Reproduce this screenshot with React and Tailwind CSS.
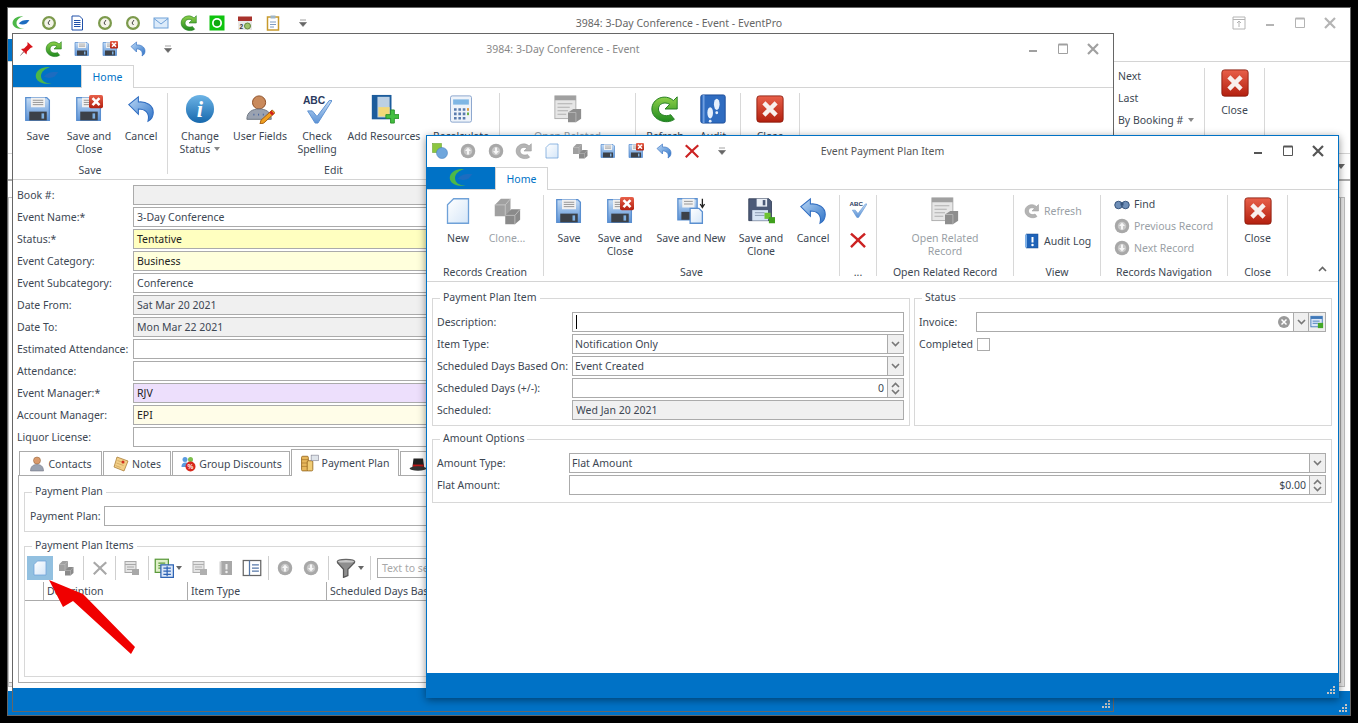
const Svg = ({ size = 16, children, className = "" }) => (
  <svg width={size} height={size} viewBox="0 0 32 32" className={"shrink-0 " + className}>
    {children}
  </svg>
);

const Defs = () => (
  <svg className="absolute w-0 h-0">
    <defs>
      <linearGradient id="blu" x1="0" y1="0" x2="0" y2="1">
        <stop offset="0" stopColor="#c4dcf5" />
        <stop offset="1" stopColor="#5d93d6" />
      </linearGradient>
      <linearGradient id="und" x1="0" y1="0" x2="1" y2="1">
        <stop offset="0" stopColor="#bcd8f5" />
        <stop offset="1" stopColor="#2f74c8" />
      </linearGradient>
      <linearGradient id="grn" x1="0" y1="0" x2="0" y2="1">
        <stop offset="0" stopColor="#8ed04a" />
        <stop offset="1" stopColor="#1f8a1f" />
      </linearGradient>
      <linearGradient id="red" x1="0" y1="0" x2="0" y2="1">
        <stop offset="0" stopColor="#e8604a" />
        <stop offset="1" stopColor="#b3200f" />
      </linearGradient>
      <linearGradient id="ppr" x1="0" y1="0" x2="1" y2="1">
        <stop offset="0" stopColor="#ffffff" />
        <stop offset="1" stopColor="#d5e6f8" />
      </linearGradient>
      <linearGradient id="inf" x1="0" y1="0" x2="0" y2="1">
        <stop offset="0" stopColor="#6db4e6" />
        <stop offset="1" stopColor="#1668ad" />
      </linearGradient>
    </defs>
  </svg>
);

const Logo = ({ size = 24 }) => (
  <Svg size={size}>
    <path d="M20 4C9 3 1 9 1 16c0 7 9 12 21 10-9 0-14-4-14-10 0-6 6-10 12-12z" fill="#4cb848" />
    <path d="M12 17c4-6 12-7 19-6l-5 6c-4 2-10 2-14 0z" fill="#1c6cc0" />
  </Svg>
);

const Clock = ({ size = 16 }) => (
  <Svg size={size}>
    <circle cx="16" cy="16" r="14" fill="#7c9a4c" />
    <circle cx="16" cy="16" r="9.5" fill="#f4f4ea" />
    <path d="M18 10l-4 6 3 4" fill="none" stroke="#444" strokeWidth="2" />
  </Svg>
);

const DocLines = ({ size = 16 }) => (
  <Svg size={size}>
    <path d="M6 2h15l6 6v22H6z" fill="#fff" stroke="#1f4fa8" strokeWidth="2" />
    <path d="M10 11h13M10 15h13M10 19h13M10 23h13" stroke="#1f4fa8" strokeWidth="2" />
  </Svg>
);

const Mail = ({ size = 16 }) => (
  <Svg size={size}>
    <rect x="2" y="6" width="28" height="20" fill="#dcebfa" stroke="#6fa1d8" strokeWidth="2" />
    <path d="M2 7l14 11L30 7" fill="none" stroke="#6fa1d8" strokeWidth="2" />
  </Svg>
);

const Refresh = ({ size = 18, gray = false }) => (
  <Svg size={size}>
    <path
      d="M29 3v13H16l5-5c-5-3-12-1-12 5s8 9 13 6l4 5C18 33 2 28 2 16 2 5 16-1 25 7z"
      fill={gray ? "#b4b4b4" : "url(#grn)"}
      stroke={gray ? "#999" : "#1f7a1f"}
      strokeWidth="1"
    />
  </Svg>
);

const GearGreen = ({ size = 16 }) => (
  <Svg size={size}>
    <rect x="1" y="1" width="30" height="30" fill="#0fc40f" />
    <circle cx="16" cy="16" r="10" fill="#fff" />
    <circle cx="16" cy="16" r="6.5" fill="#0fa80f" />
  </Svg>
);

const Calendar = ({ size = 16 }) => (
  <Svg size={size}>
    <rect x="2" y="8" width="28" height="22" fill="#e8e8e8" />
    <rect x="2" y="3" width="28" height="9" fill="#a8322c" />
    <text x="5" y="27" fontSize="13" fontWeight="700" fill="#333" fontFamily="Liberation Sans">2</text>
    <circle cx="21" cy="22" r="6" fill="#9fc46a" stroke="#64883c" strokeWidth="2" />
  </Svg>
);

const Clipboard = ({ size = 16 }) => (
  <Svg size={size}>
    <rect x="5" y="4" width="22" height="26" fill="#fff" stroke="#c89a2c" strokeWidth="3" />
    <rect x="11" y="1" width="10" height="6" fill="#9fb6c8" />
    <path d="M10 14h12M10 19h12M10 24h8" stroke="#7f9cc0" strokeWidth="2" />
  </Svg>
);

const Pin = ({ size = 16 }) => (
  <Svg size={size}>
    <path d="M19 2l11 10-5 2-7 7-1 6-5-5-8 8 7-9-5-5 6-1 7-7z" fill="#d8161c" />
    <path d="M5 29l7-8" stroke="#999" strokeWidth="2" />
  </Svg>
);

const Floppy = ({ size = 28, x = false }) => (
  <Svg size={size}>
    <path d="M2 3h24l3 3v23H2z" fill="url(#blu)" stroke="#5a8fd0" strokeWidth="1.5" />
    <rect x="8" y="3" width="16" height="11" fill="#f1f1f1" />
    <path d="M10 6h12M10 8.500h12M10 11h12" stroke="#8a8a8a" strokeWidth="1" />
    <rect x="6" y="19" width="20" height="10" fill="#3c4148" />
    <rect x="20" y="21" width="3" height="6" fill="#7fb0e0" />
    {x && (
      <g>
        <rect x="16" y="0" width="16" height="15" rx="2" fill="url(#red)" />
        <path d="M20 3.500l8 8M28 3.500l-8 8" stroke="#fff" strokeWidth="3" />
      </g>
    )}
  </Svg>
);

const SaveNew = ({ size = 28 }) => (
  <Svg size={size}>
    <path d="M1 2h22v24H1z" fill="url(#blu)" stroke="#5a8fd0" strokeWidth="1.500" />
    <rect x="6" y="2" width="14" height="10" fill="#f1f1f1" />
    <path d="M8 5h10M8 8h10" stroke="#8a8a8a" />
    <rect x="5" y="17" width="14" height="9" fill="#3c4148" />
    <path d="M15 13h10l4 4v13H15z" fill="url(#ppr)" stroke="#5a8fd0" strokeWidth="1.500" />
    <path d="M29 2v9M26.500 8l2.500 4 2.500-4" fill="none" stroke="#222" strokeWidth="1.500" />
  </Svg>
);

const SaveClone = ({ size = 28 }) => (
  <Svg size={size}>
    <path d="M2 2h23l3 3v22H2z" fill="#4c5a78" stroke="#37435c" />
    <rect x="11" y="2" width="12" height="9" fill="#e8edf5" />
    <rect x="18" y="3.500" width="3" height="6" fill="#4c5a78" />
    <rect x="6" y="15" width="18" height="12" fill="#d6e4f5" />
    <path d="M9 18h11M9 21h11" stroke="#7c8ca5" />
    <rect x="20" y="18" width="7" height="7" fill="#6cc230" />
    <rect x="25" y="23" width="7" height="7" fill="#3fa01c" />
  </Svg>
);

const Undo = ({ size = 28 }) => (
  <Svg size={size}>
    <path
      d="M2 11L13 2v6c9-1 17 4 17 12 0 4-2 8-6 10 1-4 1-8-2-11-3-3-6-3-9-3v6z"
      fill="url(#und)"
      stroke="#2f6cc0"
      strokeWidth="1.200"
    />
  </Svg>
);

const Info = ({ size = 30 }) => (
  <Svg size={size}>
    <circle cx="16" cy="16" r="15" fill="url(#inf)" />
    <text x="16" y="25" textAnchor="middle" fontSize="24" fontStyle="italic" fontWeight="700" fill="#fff" fontFamily="Liberation Serif">i</text>
  </Svg>
);

const UserPen = ({ size = 30 }) => (
  <Svg size={size}>
    <circle cx="15" cy="9" r="7" fill="#c98a5c" stroke="#8a4a20" />
    <path d="M2 27c0-8 6-11 13-11s13 3 13 11z" fill="#9aa2b0" stroke="#6c7480" />
    <path d="M9 22h1M14 22h1M19 22h1" stroke="#3f5f9c" strokeWidth="2" />
    <path d="M29 17l3 3-12 11-4 1 1-4z" fill="#f0a020" stroke="#a05a10" />
    <path d="M27 19l3 3" stroke="#d02020" strokeWidth="3" />
  </Svg>
);

const AbcCheck = ({ size = 30 }) => (
  <Svg size={size}>
    <text x="1" y="11" fontSize="11" fontWeight="700" fill="#2a3a60" fontFamily="Liberation Sans">ABC</text>
    <path d="M6 18l5 0 5 6L29 7l3 0-15 24h-3z" fill="url(#blu)" stroke="#5a8fd0" />
  </Svg>
);

const Cabinet = ({ size = 30 }) => (
  <Svg size={size}>
    <path d="M3 1h21v26H3z" fill="#1c5c9c" />
    <path d="M9 3h13v22H9z" fill="#bcd0e4" />
    <path d="M10 14h12v10H10z" fill="#f2d878" />
    <path d="M18 22h5v-5h4v5h5v4h-5v5h-4v-5h-5z" fill="#44c040" stroke="#2a9028" />
  </Svg>
);

const Calc = ({ size = 28 }) => (
  <Svg size={size}>
    <rect x="4" y="1" width="24" height="30" rx="2" fill="#eef3fa" stroke="#7f9cc8" />
    <rect x="7" y="5" width="18" height="6" fill="#7fb6e4" />
    <path d="M8 15h3v3H8zM13 15h3v3h-3zM18 15h3v3h-3zM8 20h3v3H8zM13 20h3v3h-3zM18 20h3v3h-3zM8 25h3v3H8zM13 25h3v3h-3zM18 25h3v3h-3z" fill="#5a7cae" />
    <rect x="23" y="15" width="2" height="3" fill="#e08a20" />
    <rect x="23" y="20" width="2" height="3" fill="#5aa830" />
  </Svg>
);

const Related = ({ size = 28 }) => (
  <Svg size={size}>
    <rect x="1" y="1" width="24" height="26" fill="#e6e6e6" stroke="#a8a8a8" />
    <rect x="1" y="1" width="24" height="5" fill="#a0a0a0" />
    <path d="M4 10h17M4 14h14M4 18h12M4 22h10" stroke="#a8a8a8" />
    <path d="M16 20l6-4h9v11l-6 4h-9z" fill="#8e8e8e" />
    <path d="M16 20h9v11" fill="none" stroke="#b8b8b8" />
  </Svg>
);

const Steps = ({ size = 30 }) => (
  <Svg size={size}>
    <rect x="3" y="1" width="26" height="30" rx="2" fill="#2f6cc0" stroke="#1c4c98" />
    <path d="M6 1v30" stroke="#6f9fe0" strokeWidth="2" />
    <ellipse cx="20" cy="11" rx="3" ry="6" fill="#e6f0fc" />
    <ellipse cx="13" cy="20" rx="3" ry="6" fill="#e6f0fc" />
    <circle cx="20" cy="20" r="1.500" fill="#e6f0fc" />
    <circle cx="13" cy="29" r="1.500" fill="#e6f0fc" />
  </Svg>
);

const CloseBox = ({ size = 28 }) => (
  <Svg size={size}>
    <rect x="1" y="1" width="30" height="30" rx="3" fill="url(#red)" stroke="#8a1a0c" />
    <path d="M9 9l14 14M23 9L9 23" stroke="#f8f0ee" strokeWidth="5" />
  </Svg>
);

const Page = ({ size = 28 }) => (
  <Svg size={size}>
    <path d="M11 2h17v28H4V9z" fill="url(#ppr)" stroke="#6fa1d8" strokeWidth="1.500" />
  </Svg>
);

const Cubes = ({ size = 28, c = "#a0a0a0" }) => (
  <Svg size={size}>
    <path d="M2 9l7-7h11v15l-6 5H2z" fill={c} />
    <path d="M2 9h12v13M14 9l6-7" fill="none" stroke="#c8c8c8" />
    <path d="M14 21l7-7h10v12l-6 5H14z" fill="#8a8a8a" />
    <path d="M14 21h11v10M25 21l6-7" fill="none" stroke="#c0c0c0" />
  </Svg>
);

const Shapes = ({ size = 16 }) => (
  <Svg size={size}>
    <rect x="1" y="1" width="18" height="18" fill="#8cc63f" stroke="#5f9a20" />
    <circle cx="20" cy="20" r="11" fill="#6fa6dc" stroke="#3f78b8" />
  </Svg>
);

const Nav = ({ size = 16, dir = "up" }) => (
  <Svg size={size}>
    <circle cx="16" cy="16" r="14.500" fill="#a8a8a8" />
    <circle cx="16" cy="16" r="8.500" fill="#c8c8c8" />
    <path
      d={dir === "up" ? "M16 9l6 7h-4v7h-4v-7h-4z" : "M16 23l6-7h-4V9h-4v7h-4z"}
      fill="#f6f6f6"
    />
  </Svg>
);

const RedX = ({ size = 16, c = "#cc2222" }) => (
  <Svg size={size}>
    <path d="M5 3l11 10L27 3l3 3-11 10 11 11-3 3-11-11L5 30l-3-3 11-11L2 6z" fill={c} />
  </Svg>
);

const Binoculars = ({ size = 16 }) => (
  <Svg size={size}>
    <circle cx="9" cy="18" r="7.500" fill="#6f8fb8" stroke="#36547c" strokeWidth="2" />
    <circle cx="23" cy="18" r="7.500" fill="#6f8fb8" stroke="#36547c" strokeWidth="2" />
    <rect x="13" y="13" width="6" height="6" fill="#36547c" />
  </Svg>
);

const AuditSmall = ({ size = 16 }) => (
  <Svg size={size}>
    <rect x="5" y="2" width="23" height="28" fill="#1f63b8" stroke="#174a8c" />
    <rect x="2" y="3" width="4" height="26" fill="#7fb0e6" />
    <path d="M17 8v11" stroke="#fff" strokeWidth="4" />
    <circle cx="17" cy="24" r="2.500" fill="#fff" />
  </Svg>
);

const AuditGray = () => (
  <Svg size={16}>
    <rect x="6" y="2" width="22" height="28" fill="#a8a8a8" />
    <rect x="3" y="3" width="4" height="26" fill="#d0d0d0" />
    <path d="M17 8v11" stroke="#eee" strokeWidth="4" />
    <circle cx="17" cy="24" r="2.500" fill="#eee" />
  </Svg>
);

const Contact = ({ size = 16 }) => (
  <Svg size={size}>
    <circle cx="16" cy="9" r="7" fill="#d99a6c" stroke="#8a5a30" />
    <path d="M3 30c0-10 6-13 13-13s13 3 13 13z" fill="#9aa2b0" stroke="#667" />
  </Svg>
);

const Notes = ({ size = 16 }) => (
  <Svg size={size}>
    <path d="M8 2l22 8-8 20-20-8z" fill="#f2cf88" stroke="#a87a30" strokeWidth="1.500" />
    <path d="M9 9l14 5M7 14l14 5M5 19l10 4" stroke="#b88a40" />
    <circle cx="20" cy="12" r="3" fill="#d03020" />
  </Svg>
);

const Discount = ({ size = 16 }) => (
  <Svg size={size}>
    <circle cx="10" cy="7" r="5" fill="#5a9be0" />
    <circle cx="21" cy="7" r="5" fill="#7cc04c" />
    <path d="M3 22c0-7 4-9 8-9s8 2 8 9z" fill="#5a9be0" />
    <circle cx="21" cy="21" r="10" fill="#d8281c" />
    <text x="21" y="26" textAnchor="middle" fontSize="13" fontWeight="700" fill="#fff" fontFamily="Liberation Sans">%</text>
  </Svg>
);

const Coins = ({ size = 18 }) => (
  <Svg size={size}>
    <rect x="1" y="4" width="12" height="26" rx="2" fill="#e8b85c" stroke="#96661c" strokeWidth="1.500" />
    <path d="M1 10h12M1 16h12M1 22h12" stroke="#96661c" />
    <rect x="11" y="12" width="10" height="18" rx="2" fill="#f0cc74" stroke="#96661c" strokeWidth="1.500" />
    <rect x="18" y="2" width="13" height="10" fill="#dfe4ea" stroke="#778" />
  </Svg>
);

const Hat = ({ size = 18 }) => (
  <Svg size={size}>
    <path d="M8 6h17l2 16H6z" fill="#222" />
    <rect x="7" y="17" width="19" height="4" fill="#c01818" />
    <ellipse cx="16" cy="24" rx="15" ry="4" fill="#333" />
  </Svg>
);

const TableIco = ({ size = 16, c = "#a8a8a8" }) => (
  <Svg size={size}>
    <rect x="2" y="3" width="22" height="22" fill="#e4e4e4" stroke={c} strokeWidth="2" />
    <path d="M2 9h22M6 14h14M6 19h14" stroke={c} strokeWidth="2" />
    <rect x="16" y="18" width="14" height="12" fill={c} />
  </Svg>
);

const ColumnsIco = ({ size = 20 }) => (
  <Svg size={size}>
    <rect x="2" y="2" width="21" height="21" fill="#dff0c8" stroke="#5c9a3c" strokeWidth="2" />
    <path d="M7 8h11M7 12h11M7 16h11" stroke="#5c9a3c" strokeWidth="2" />
    <rect x="11" y="11" width="20" height="20" fill="#dbe7f8" stroke="#2f64b4" strokeWidth="2" />
    <path d="M15 16h12M15 21h12M15 26h12M21 13v16" stroke="#2f64b4" strokeWidth="2" />
  </Svg>
);

const PanelIco = ({ size = 20 }) => (
  <Svg size={size}>
    <rect x="2" y="4" width="28" height="24" fill="#fff" stroke="#666" strokeWidth="2" />
    <path d="M12 4v24M16 11h11M16 16h11M16 21h11" stroke="#5577a8" strokeWidth="2" />
  </Svg>
);

const Funnel = ({ size = 20 }) => (
  <Svg size={size}>
    <ellipse cx="16" cy="6" rx="14" ry="4" fill="#c8c8c8" stroke="#666" strokeWidth="2" />
    <path d="M2 7l10 11v13l7-3V18L30 7" fill="#8e8e8e" stroke="#555" strokeWidth="2" />
  </Svg>
);

const TableGreen = () => (
  <Svg size={14}>
    <rect x="2" y="3" width="26" height="24" fill="#dbe7f8" stroke="#3f78b8" strokeWidth="2" />
    <rect x="2" y="3" width="26" height="6" fill="#3f78b8" />
    <path d="M6 14h16M6 19h12" stroke="#3f78b8" strokeWidth="2" />
    <rect x="18" y="18" width="12" height="12" fill="#44a828" />
  </Svg>
);

const Caret = ({ className = "" }) => (
  <span className={"inline-block w-0 h-0 border-x-[3px] border-x-transparent border-t-[4px] border-t-[#666] " + className} />
);

const QatMore = () => (
  <svg width="8" height="8" viewBox="0 0 8 8" className="ml-[4px]">
    <path d="M1 1h6M0.500 3.500h7l-3.500 4z" fill="#666" stroke="#666" strokeWidth="0.600" />
  </svg>
);

const Grip = () => (
  <svg width="8" height="8" viewBox="0 0 8 8" fill="#c4c4c4">
    <path d="M6 0h2v2H6zM3 3h2v2H3zM6 3h2v2H6zM0 6h2v2H0zM3 6h2v2H3zM6 6h2v2H6z" />
  </svg>
);

const Chev = ({ up = false, c = "#777" }) => (
  <svg width="9" height="6" viewBox="0 0 9 6">
    <path d={up ? "M1 5l3.500-3.500L8 5" : "M1 1l3.500 3.500L8 1"} fill="none" stroke={c} strokeWidth="1.600" />
  </svg>
);

const Cell = ({ children }) => (
  <div className="w-[28px] h-[28px] flex items-center justify-center shrink-0">{children}</div>
);

const Controls = ({ pin = false, c }) => (
  <div className="flex items-center gap-[14px] pr-[12px] pb-[2px]">
    {pin && (
      <svg width="14" height="14" viewBox="0 0 14 14" fill="none" stroke={c} className="mr-[2px]">
        <path d="M1 1h12v12H1zM1 3.500h12M7 11V5M5 7l2-2 2 2" />
      </svg>
    )}
    <svg width="16" height="16" viewBox="0 0 16 16"><rect x="4" y="9" width="8" height="2" fill={c} /></svg>
    <svg width="16" height="16" viewBox="0 0 16 16" fill="none" stroke={c}><path d="M3.500 3.500h9v9h-9z" /><path d="M3.500 3.500h9" strokeWidth="2" /></svg>
    <svg width="16" height="16" viewBox="0 0 16 16" fill="none" stroke={c} strokeWidth="2.200"><path d="M3 3l10 10M13 3L3 13" /></svg>
  </div>
);

const TitleBar = ({ title, titleColor, btn, pin, children }) => (
  <div className="relative h-[31px] flex items-center justify-between shrink-0">
    <div className="flex items-center -ml-px pb-[2px]">{children}</div>
    <div className={"absolute inset-x-0 top-0 h-full pb-[2px] flex items-center justify-center pointer-events-none " + titleColor}>
      {title}
    </div>
    <Controls pin={pin} c={btn} />
  </div>
);

const TabRow = ({ blueW = "w-[68px]", homeW = "w-[53px]" }) => (
  <div className="flex h-[23px] border-b border-[#d4d4d4] shrink-0">
    <div className={"h-[22px] bg-[#0072c6] flex items-center justify-center " + blueW}>
      <Logo size={24} />
    </div>
    <div className={"h-[23px] bg-white border border-b-0 border-[#d4d4d4] text-[#0072c6] flex items-center justify-center " + homeW}>
      Home
    </div>
  </div>
);

const Group = ({ label, className = "", pad = "", children }) => (
  <div className={"h-[81px] flex flex-col shrink-0 border-r border-[#d8d8d8] " + className}>
    <div className={"h-[70px] flex shrink-0 " + pad}>{children}</div>
    {label && <div className="text-center leading-[14px] whitespace-nowrap">{label}</div>}
  </div>
);

const Big = ({ w, icon, l1, l2, dis = false, caret = false }) => (
  <div className={"flex flex-col items-center pt-[2px] shrink-0 " + w + (dis ? " text-[#9a9fa6]" : "")}>
    <div className="h-[28px] flex items-center justify-center">{icon}</div>
    <div className="mt-[7px] leading-[13px] text-center whitespace-nowrap">
      {l1}
      {l2 && <br />}
      {l2}
      {caret && <Caret className="ml-[4px] mb-[2px] border-t-[#888]" />}
    </div>
  </div>
);

const SmallBtn = ({ icon, text, dis = false }) => (
  <div className={"flex items-center gap-[4px] whitespace-nowrap h-[22px]" + (dis ? " text-[#9a9fa6]" : "")}>
    {icon}
    <span>{text}</span>
  </div>
);

const Box = ({ className = "", children }) => (
  <div className={"h-[20px] border border-[#ababab] flex items-center overflow-hidden whitespace-nowrap " + className}>{children}</div>
);

const Combo = ({ text, className = "" }) => (
  <Box className={className}>
    <span className="flex-1 px-[2px] whitespace-nowrap">{text}</span>
    <span className="w-[16px] h-full bg-[#efefef] border-l border-[#ababab] flex items-center justify-center">
      <Chev />
    </span>
  </Box>
);

const Spin = ({ text, className = "" }) => (
  <Box className={className}>
    <span className="flex-1 px-[3px] text-right">{text}</span>
    <span className="w-[16px] h-full bg-[#efefef] border-l border-[#ababab] flex flex-col items-center justify-center gap-[1px]">
      <Chev up />
      <Chev />
    </span>
  </Box>
);

const Row = ({ label, w, children }) => (
  <div className="flex items-center h-[20px]">
    <div className={"shrink-0 whitespace-nowrap " + w}>{label}</div>
    {children}
  </div>
);

const Grp = ({ title, className = "", children }) => (
  <fieldset className={"border border-[#d8d8d8] min-w-0 px-[4px] " + className}>
    <legend className="ml-[3px] px-[3px] leading-[12px] h-[14px]">{title}</legend>
    {children}
  </fieldset>
);

const Status = ({ className = "" }) => (
  <div className={"bg-[#0072c6] flex justify-end items-end pr-[3px] pb-[3px] shrink-0 " + className}>
    <Grip />
  </div>
);

const TabItem = ({ icon, text, active = false, className }) => (
  <div
    className={
      "flex items-center gap-[3px] border border-b-0 border-[#ababab] whitespace-nowrap shrink-0 bg-white " +
      className +
      (active ? " h-[27px] -mt-[2px] -mb-px relative z-10" : " h-[24px]")
    }
  >
    {icon}
    {text && <span>{text}</span>}
  </div>
);

const TbSep = () => <div className="w-px h-[24px] bg-[#cfcfcf] shrink-0" />;

const OuterWindow = () => (
  <div className="absolute left-[7px] top-[7px] w-[1344px] h-[709px] bg-white border border-[#666] flex flex-col overflow-hidden">
    <TitleBar title="3984: 3-Day Conference - Event - EventPro" titleColor="text-[#666]" btn="#b4b4b4" pin>
      <Cell><Logo size={18} /></Cell>
      <Cell><Clock /></Cell>
      <Cell><DocLines /></Cell>
      <Cell><Clock /></Cell>
      <Cell><Clock /></Cell>
      <Cell><Mail /></Cell>
      <Cell><Refresh /></Cell>
      <Cell><GearGreen /></Cell>
      <Cell><Calendar /></Cell>
      <Cell><Clipboard /></Cell>
      <Cell><QatMore /></Cell>
    </TitleBar>
    <TabRow />
    <div className="h-[92px] border-b border-[#d4d4d4] flex justify-end pr-[85px] shrink-0">
      <div className="w-[91px] h-[70px] mt-[6px] border-r border-[#d8d8d8] pl-[4px]">
        <div className="-mt-[3px]">
          <div className="h-[22px] flex items-center">Next</div>
          <div className="h-[22px] flex items-center">Last</div>
          <div className="h-[22px] flex items-center gap-[5px]">By Booking # <Caret className="border-t-[#888]" /></div>
        </div>
      </div>
      <div className="w-[60px] h-[70px] mt-[6px] border-r border-[#d8d8d8] flex flex-col items-center pt-[1px]">
        <CloseBox />
        <div className="mt-[6px]">Close</div>
      </div>
    </div>
    <div className="h-[27px] flex justify-end items-center pr-[5px] border-b-2 border-[#aaaaaa] shrink-0">
      <span className="w-0 h-0 border-x-[4px] border-x-transparent border-t-[5px] border-t-[#666]" />
    </div>
    <div className="flex-1 mr-[5px] mt-[16px] mb-[4px] border border-[#bdbdbd] bg-[#e8e8e8] pr-[3px] pb-[3px]">
      <div className="h-full border-r border-b border-[#a8a8a8] bg-white" />
    </div>
    <Status className="h-[24px]" />
  </div>
);

const EventWindow = () => (
  <div className="absolute left-[12px] top-[33px] w-[1102px] h-[679px] bg-white border border-[#666] flex flex-col overflow-hidden">
    <TitleBar title="3984: 3-Day Conference - Event" titleColor="text-[#888]" btn="#a0a0a0">
      <Cell><Pin /></Cell>
      <Cell><Refresh /></Cell>
      <Cell><Floppy size={16} /></Cell>
      <Cell><Floppy size={16} x /></Cell>
      <Cell><Undo size={16} /></Cell>
      <Cell><QatMore /></Cell>
    </TitleBar>
    <TabRow />
    <div className="h-[81px] py-[5px] flex border-b border-[#d4d4d4] box-content -mb-px shrink-0">
      <Group label="Save" className="w-[155px]" pad="pl-[5px]">
        <Big w="w-[40px]" icon={<Floppy />} l1="Save" />
        <Big w="w-[62px]" icon={<Floppy x />} l1="Save and" l2="Close" />
        <Big w="w-[42px]" icon={<Undo />} l1="Cancel" />
      </Group>
      <Group label="Edit" className="w-[332px]" pad="pl-[4px]">
        <Big w="w-[56px]" icon={<Info />} l1="Change" l2="Status" caret />
        <Big w="w-[64px]" icon={<UserPen />} l1="User Fields" />
        <Big w="w-[50px]" icon={<AbcCheck />} l1="Check" l2="Spelling" />
        <Big w="w-[84px]" icon={<Cabinet />} l1="Add Resources" />
        <Big w="w-[70px]" icon={<Calc />} l1="Recalculate" />
      </Group>
      <Group className="w-[136px]">
        <Big w="w-full" dis icon={<Related />} l1="Open Related" />
      </Group>
      <Group className="w-[105px]" pad="pl-[5px]">
        <Big w="w-[48px]" icon={<Refresh size={30} />} l1="Refresh" />
        <Big w="w-[48px]" icon={<Steps />} l1="Audit" />
      </Group>
      <Group className="w-[59px]">
        <Big w="w-full" icon={<CloseBox />} l1="Close" />
      </Group>
    </div>
    <div className="pt-[6px] px-[4px] flex flex-col gap-[2px] shrink-0">
      <Row label="Book #:" w="w-[116px]"><Box className="flex-1 bg-[#f0f0f0]" /></Row>
      <Row label="Event Name:*" w="w-[116px]"><Box className="flex-1 px-[3px]">3-Day Conference</Box></Row>
      <Row label="Status:*" w="w-[116px]"><Box className="flex-1 px-[3px] bg-[#ffffc0] text-[#222]">Tentative</Box></Row>
      <Row label="Event Category:" w="w-[116px]"><Box className="flex-1 px-[3px] bg-[#ffffdc] text-[#222]">Business</Box></Row>
      <Row label="Event Subcategory:" w="w-[116px]"><Box className="flex-1 px-[3px]">Conference</Box></Row>
      <Row label="Date From:" w="w-[116px]"><Box className="flex-1 px-[3px] bg-[#f0f0f0]">Sat Mar 20 2021</Box></Row>
      <Row label="Date To:" w="w-[116px]"><Box className="flex-1 px-[3px] bg-[#f0f0f0]">Mon Mar 22 2021</Box></Row>
      <Row label="Estimated Attendance:" w="w-[116px]"><Box className="flex-1" /></Row>
      <Row label="Attendance:" w="w-[116px]"><Box className="flex-1" /></Row>
      <Row label="Event Manager:*" w="w-[116px]"><Box className="flex-1 px-[3px] bg-[#eddffc] text-[#222]">RJV</Box></Row>
      <Row label="Account Manager:" w="w-[116px]"><Box className="flex-1 px-[3px] bg-[#fffde8] text-[#222]">EPI</Box></Row>
      <Row label="Liquor License:" w="w-[116px]"><Box className="flex-1" /></Row>
    </div>
    <div className="flex pl-[6px] mt-[4px] gap-px shrink-0">
      <TabItem className="w-[83px] justify-center" icon={<Contact />} text="Contacts" />
      <TabItem className="w-[68px] justify-center" icon={<Notes />} text="Notes" />
      <TabItem className="w-[118px] justify-center" icon={<Discount />} text="Group Discounts" />
      <TabItem className="w-[108px] justify-center" active icon={<Coins />} text="Payment Plan" />
      <TabItem className="w-[80px] pl-[8px]" icon={<Hat />} />
    </div>
    <div className="h-[208px] mx-[5px] border border-[#ababab] px-[5px] flex flex-col shrink-0">
      <Grp title="Payment Plan" className="h-[47px] mt-[9px]">
        <div className="flex items-center h-[20px] mt-[7px] pl-px">
          <div className="w-[74px] shrink-0 whitespace-nowrap">Payment Plan:</div>
          <Box className="flex-1" />
        </div>
      </Grp>
      <Grp title="Payment Plan Items" className="h-[138px] mt-[7px]">
        <div className="flex items-center h-[24px] -ml-[2px] mt-[3px]">
          <div className="w-[26px] h-[24px] bg-[#92c0e0] flex items-center justify-center shrink-0"><Page size={16} /></div>
          <div className="w-[26px] mr-[4px] flex justify-center shrink-0"><Cubes size={16} /></div>
          <TbSep />
          <div className="w-[31px] flex justify-center shrink-0"><RedX size={16} c="#a8a8a8" /></div>
          <TbSep />
          <div className="w-[32px] flex justify-center shrink-0"><TableIco /></div>
          <TbSep />
          <div className="w-[38px] flex items-center justify-center gap-[2px] shrink-0"><ColumnsIco /><Caret /></div>
          <div className="w-[26px] flex justify-center shrink-0"><TableIco c="#b0b0b0" /></div>
          <div className="w-[26px] flex justify-center shrink-0"><AuditGray /></div>
          <div className="w-[26px] mr-[3px] flex justify-center shrink-0"><PanelIco /></div>
          <TbSep />
          <div className="w-[32px] flex justify-center shrink-0"><Nav /></div>
          <div className="w-[20px] mr-[7px] flex justify-center shrink-0"><Nav dir="down" /></div>
          <TbSep />
          <div className="w-[41px] flex items-center justify-center gap-[2px] shrink-0"><Funnel /><Caret /></div>
          <TbSep />
          <div className="ml-[6px] w-[200px] h-[20px] border border-[#ababab] px-[4px] flex items-center text-[#a8a8a8] shrink-0">Text to search...</div>
        </div>
        <div className="flex h-[19px] mt-[2px] -mx-[4px] border-b border-[#ababab] items-center">
          <div className="w-[19px] h-full border-r border-[#ababab] shrink-0" />
          <div className="w-[144px] h-full border-r border-[#ababab] pl-[3px] flex items-center shrink-0">Description</div>
          <div className="w-[139px] h-full border-r border-[#ababab] pl-[3px] flex items-center shrink-0">Item Type</div>
          <div className="pl-[3px] whitespace-nowrap">Scheduled Days Based On</div>
        </div>
      </Grp>
    </div>
    <div className="flex-1" />
    <Status className="h-[23px]" />
  </div>
);

const ItemWindow = () => (
  <div className="absolute left-[426px] top-[135px] w-[913px] h-[563px] bg-white border border-[#0072c6] flex flex-col overflow-hidden shadow-[0_2px_8px_rgba(0,0,0,0.45)]">
    <TitleBar title="Event Payment Plan Item" titleColor="text-[#555]" btn="#555">
      <Cell><Shapes /></Cell>
      <Cell><Nav /></Cell>
      <Cell><Nav dir="down" /></Cell>
      <Cell><Refresh gray /></Cell>
      <Cell><Page size={16} /></Cell>
      <Cell><Cubes size={16} /></Cell>
      <Cell><Floppy size={16} /></Cell>
      <Cell><Floppy size={16} x /></Cell>
      <Cell><Undo size={16} /></Cell>
      <Cell><RedX /></Cell>
      <Cell><QatMore /></Cell>
    </TitleBar>
    <TabRow />
    <div className="h-[81px] py-[5px] flex border-b border-[#d4d4d4] box-content shrink-0">
      <Group label="Records Creation" className="w-[117px]" pad="pl-[6px]">
        <Big w="w-[50px]" icon={<Page />} l1="New" />
        <Big w="w-[48px]" dis icon={<Cubes />} l1="Clone..." />
      </Group>
      <Group label="Save" className="w-[296px]" pad="pl-[8px]">
        <Big w="w-[34px]" icon={<Floppy />} l1="Save" />
        <Big w="w-[68px]" icon={<Floppy x />} l1="Save and" l2="Close" />
        <Big w="w-[74px]" icon={<SaveNew />} l1="Save and New" />
        <Big w="w-[66px]" icon={<SaveClone />} l1="Save and" l2="Clone" />
        <Big w="w-[38px]" icon={<Undo />} l1="Cancel" />
      </Group>
      <Group label="..." className="w-[37px]">
        <div className="w-full flex flex-col items-center pt-[5px] gap-[13px]">
          <AbcCheck size={18} />
          <RedX size={18} />
        </div>
      </Group>
      <Group label="Open Related Record" className="w-[137px]">
        <Big w="w-full" dis icon={<Related />} l1="Open Related" l2="Record" />
      </Group>
      <Group label="View" className="w-[87px]">
        <div className="flex flex-col pl-[10px] pt-[5px] gap-[8px]">
          <SmallBtn dis icon={<Refresh gray size={16} />} text="Refresh" />
          <SmallBtn icon={<AuditSmall />} text="Audit Log" />
        </div>
      </Group>
      <Group label="Records Navigation" className="w-[127px]">
        <div className="flex flex-col pl-[13px] -mt-[2px]">
          <SmallBtn icon={<Binoculars />} text="Find" />
          <SmallBtn dis icon={<Nav />} text="Previous Record" />
          <SmallBtn dis icon={<Nav dir="down" />} text="Next Record" />
        </div>
      </Group>
      <Group label="Close" className="w-[60px]">
        <Big w="w-full" icon={<CloseBox />} l1="Close" />
      </Group>
      <div className="flex-1 flex justify-end items-end pr-[11px] pb-[4px]">
        <Chev up c="#666" />
      </div>
    </div>
    <div className="flex-1 pl-[5px] pr-[6px] pt-[9px] flex flex-col min-h-0">
      <div className="flex gap-[4px]">
        <Grp title="Payment Plan Item" className="w-[478px] h-[135px] pr-[5px]">
          <div className="flex flex-col gap-[2px] pt-[7px]">
            <Row label="Description:" w="w-[135px]">
              <Box className="flex-1 pl-[3px]"><span className="w-px h-[14px] bg-black" /></Box>
            </Row>
            <Row label="Item Type:" w="w-[135px]"><Combo className="flex-1" text="Notification Only" /></Row>
            <Row label="Scheduled Days Based On:" w="w-[135px]"><Combo className="flex-1" text="Event Created" /></Row>
            <Row label="Scheduled Days (+/-):" w="w-[135px]"><Spin className="flex-1" text="0" /></Row>
            <Row label="Scheduled:" w="w-[135px]"><Box className="flex-1 px-[3px] bg-[#f0f0f0]">Wed Jan 20 2021</Box></Row>
          </div>
        </Grp>
        <Grp title="Status" className="flex-1 h-[135px] pr-[5px]">
          <div className="flex flex-col gap-[2px] pt-[7px]">
            <Row label="Invoice:" w="w-[57px]">
              <Box className="flex-1">
                <span className="flex-1" />
                <svg width="14" height="14" viewBox="0 0 14 14" className="mr-[2px]">
                  <circle cx="7" cy="7" r="6" fill="#9a9a9a" />
                  <path d="M4.500 4.500l5 5M9.500 4.500l-5 5" stroke="#fff" strokeWidth="1.500" />
                </svg>
                <span className="w-[16px] h-full bg-[#efefef] border-x border-[#ababab] flex items-center justify-center"><Chev /></span>
                <span className="w-[16px] h-full bg-[#efefef] flex items-center justify-center"><TableGreen /></span>
              </Box>
            </Row>
            <Row label="Completed" w="w-[58px]">
              <span className="w-[13px] h-[13px] border border-[#ababab]" />
            </Row>
          </div>
        </Grp>
      </div>
      <Grp title="Amount Options" className="h-[71px] mt-[6px] pr-[5px]">
        <div className="flex flex-col gap-[2px] pt-[7px]">
          <Row label="Amount Type:" w="w-[132px]"><Combo className="flex-1" text="Flat Amount" /></Row>
          <Row label="Flat Amount:" w="w-[132px]"><Spin className="flex-1" text="$0.00" /></Row>
        </div>
      </Grp>
    </div>
    <Status className="h-[24px]" />
  </div>
);

const RedArrow = () => (
  <svg className="absolute left-0 top-0 pointer-events-none" width="1358" height="723" viewBox="0 0 1358 723">
    <polygon points="49,580 83,594 135,647 131,654 73,601 63,607" fill="#f00000" />
  </svg>
);

export default function App() {
  return (
    <div className="relative w-[1358px] h-[723px] bg-black overflow-hidden font-['Noto_Sans',sans-serif] text-[10.5px] leading-[14px] text-[#3d4753]">
      <Defs />
      <OuterWindow />
      <EventWindow />
      <ItemWindow />
      <RedArrow />
    </div>
  );
}
